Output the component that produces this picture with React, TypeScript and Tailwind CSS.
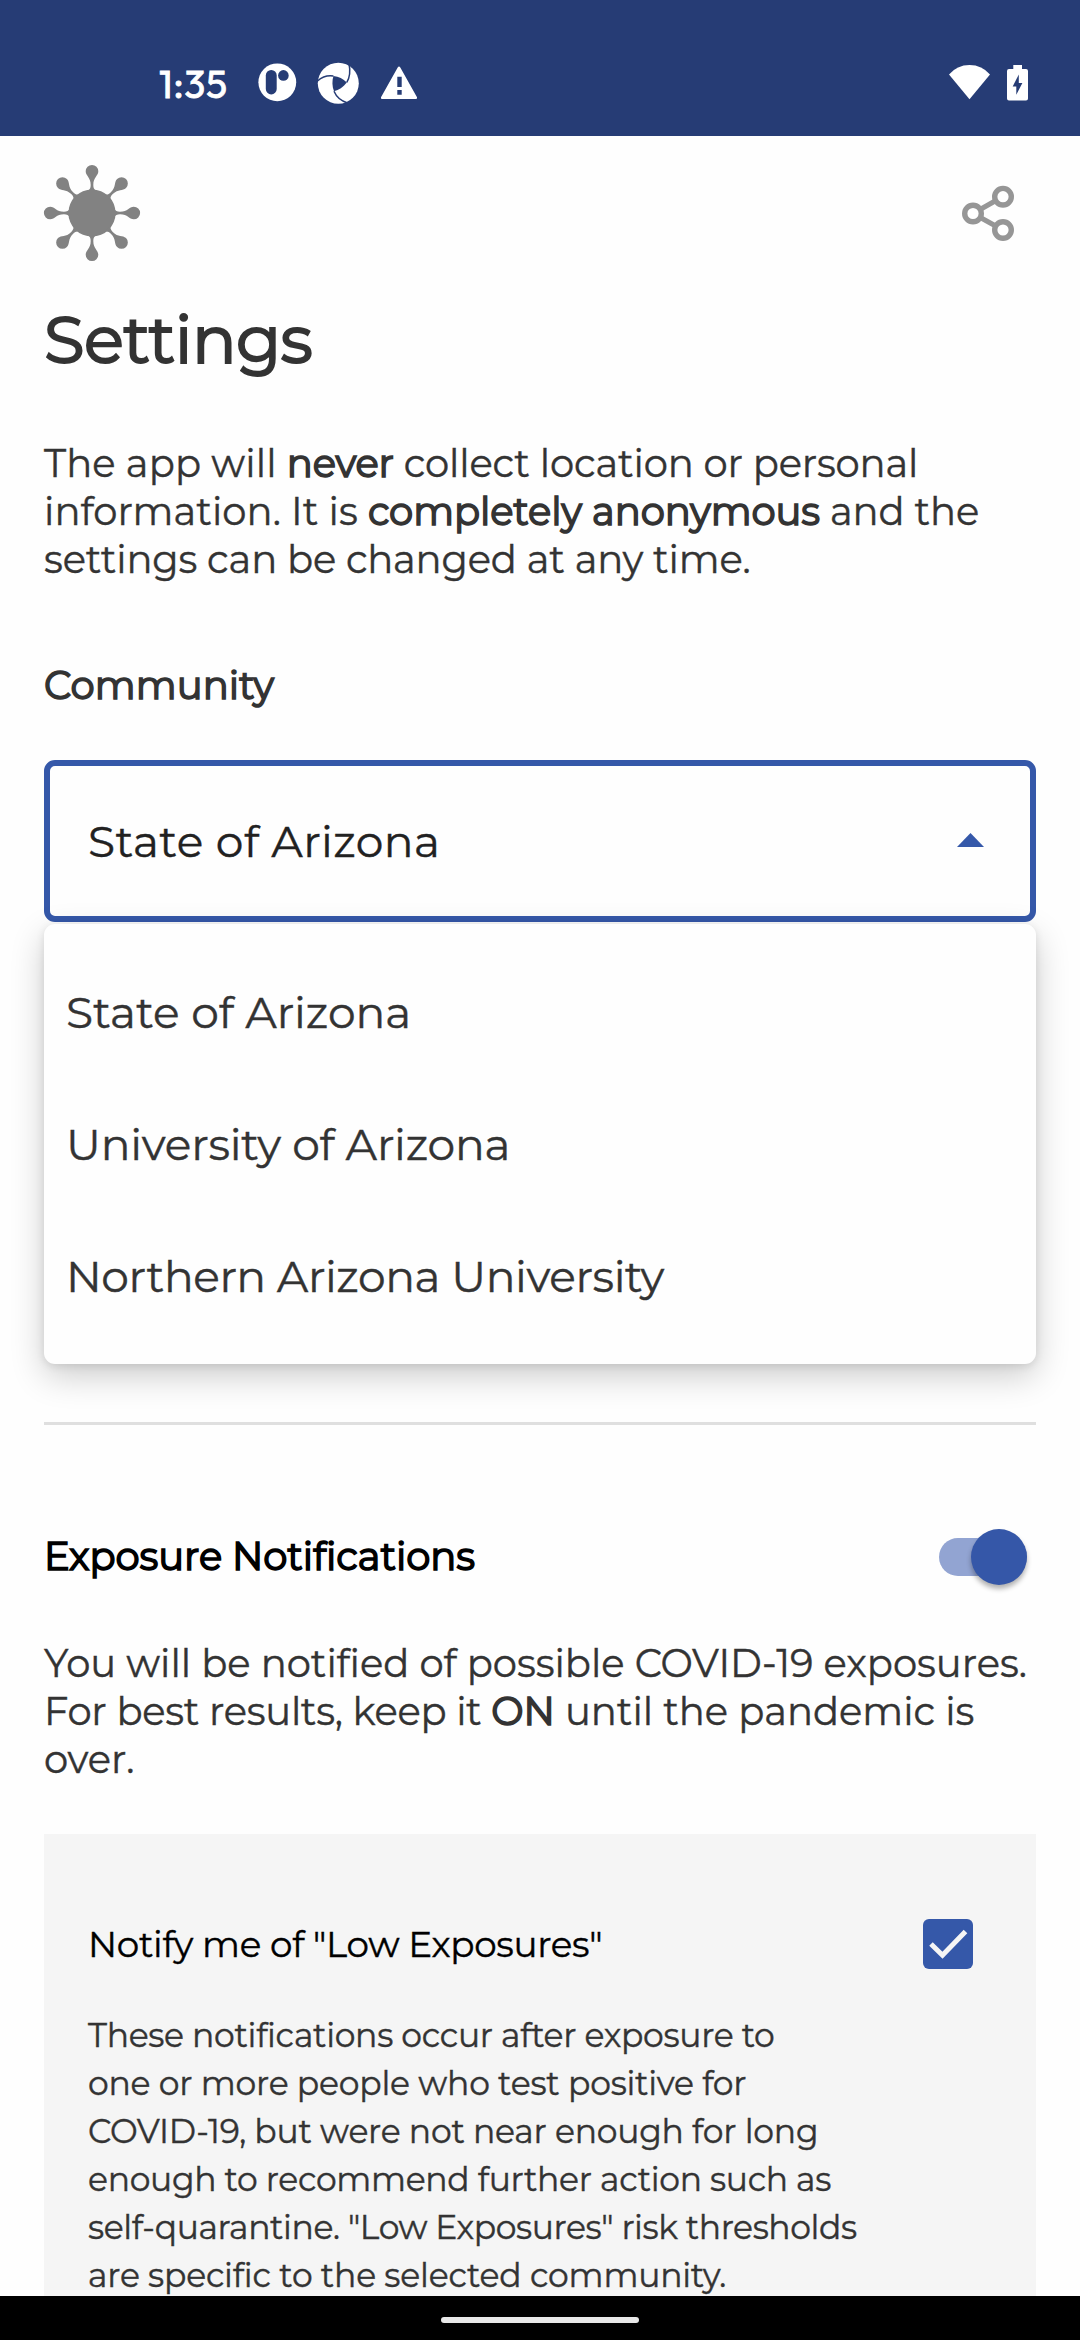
import React from "react";

function VirusIcon() {
  return (
    <svg className="-ml-px h-[98px] w-[98px]" viewBox="-49 -49 98 98" fill="#828282">
      <circle r="23.6" />
      {[0, 45, 90, 135, 180, 225, 270, 315].map((a) => (
        <path
          key={a}
          transform={`rotate(${a})`}
          d="M-4.5 -22C-2 -23.5 -1.3 -25 -1.3 -28C-1.3 -36 -6.3 -37 -6.3 -41.8A6.3 6.3 0 0 1 6.3 -41.8C6.3 -37 1.3 -36 1.3 -28C1.3 -25 2 -23.5 4.5 -22Z"
        />
      ))}
    </svg>
  );
}

function ShareIcon() {
  return (
    <svg className="h-[56px] w-[54px]" viewBox="0 0 54 56" fill="none" stroke="#969696">
      <path d="M12 28.5L42 11.5M12 28.5L42 45" strokeWidth="5" />
      <g fill="#fff" strokeWidth="5.4">
        <circle cx="12" cy="28.5" r="8.3" />
        <circle cx="42" cy="11.7" r="8.3" />
        <circle cx="42" cy="45" r="8.3" />
      </g>
    </svg>
  );
}

function StatusBar() {
  return (
    <div className="flex h-[136px] shrink-0 items-center bg-[#263c75] pt-[30px] pr-[50px] pl-[159px]">
      <span className="w-[99px] pt-[2px] font-['Outfit','Montserrat','Inter',sans-serif] text-[39px] leading-[48px] tracking-[0.6px] text-white [-webkit-text-stroke:0.8px]">
        1:35
      </span>
      <svg className="h-[42px] w-[160px]" viewBox="258 62 160 42" fill="#fff">
        <circle cx="277.3" cy="82.3" r="18.9" />
        <g fill="#263c75">
          <rect x="265.8" y="70" width="10.9" height="24.4" rx="5.4" />
          <circle cx="283.4" cy="75.4" r="5.3" />
        </g>
        <circle cx="338.3" cy="83.3" r="20.5" />
        <g fill="none" stroke="#263c75" strokeWidth="1.5">
          <path d="M346.8 82.4C349.5 78 350.5 71 349 63.5" />
          <path d="M334 91.3C336 96 341 101 347.5 103" />
          <path d="M333.4 76C327 75 322 77 317.5 81" />
        </g>
        <path d="M333.4 76C339 76.5 343 79 346.8 82.4C343 87 339 90 334 91.3C332 86 332 81 333.4 76Z" fill="#263c75" />
        <path
          fillRule="evenodd"
          d="M397.7 67.5Q399 65.6 400.3 67.5L417 97.3Q417.6 99 416 99H382Q380.4 99 381 97.3ZM397.3 76.7V87H401.7V76.7ZM397.3 90V94.7H401.7V90Z"
        />
      </svg>
      <svg className="ml-auto h-[40px] w-[82px]" viewBox="948 63 82 40" fill="#fff">
        <path d="M949 74.5Q957 65 969.5 65Q982 65 990 74.5L969.5 99.3Z" />
        <path
          fillRule="evenodd"
          d="M1013.3 65H1022V69H1026Q1028 69 1028 71V98.5Q1028 100.5 1026 100.5H1009Q1007 100.5 1007 98.5V71Q1007 69 1009 69H1013.3ZM1018.8 74.5L1012.7 86.4H1016.3V94.8L1022.4 83H1018.8Z"
        />
      </svg>
    </div>
  );
}

function Strong({ children }: { children: React.ReactNode }) {
  return <span className="[-webkit-text-stroke:1.5px]">{children}</span>;
}

function Lines({ items }: { items: [React.ReactNode, string][] }) {
  return (
    <>
      {items.map(([text, tracking], i) => (
        <span key={i} className={`block whitespace-nowrap ${tracking}`}>
          {text}
        </span>
      ))}
    </>
  );
}

export default function App() {
  return (
    <div className="flex h-[2340px] w-[1080px] flex-col overflow-hidden bg-[#fefefe] font-['Montserrat','Inter',sans-serif] text-[38.5px] leading-[48px] text-[#333] [-webkit-text-stroke:0.4px]">
      <StatusBar />
      <main className="flex min-h-0 flex-1 flex-col overflow-hidden px-[44px]">
        <header className="flex h-[154px] shrink-0 items-center justify-between pr-[21px]">
          <VirusIcon />
          <ShareIcon />
        </header>
        <h1 className="mt-[10px] shrink-0 text-[66px] leading-[80px] tracking-[-0.6px] [-webkit-text-stroke:2px]">
          Settings
        </h1>
        <p className="mt-[60px] shrink-0">
          <Lines
            items={[
              [
                <>
                  <span className="tracking-[0.1px]">The app will </span>
                  <Strong>never</Strong> collect location or personal
                </>,
                "tracking-[-0.15px]",
              ],
              [
                <>
                  <span className="tracking-[0.05px]">information. It is </span>
                  <Strong>completely anonymous</Strong> and the
                </>,
                "tracking-[-0.1px]",
              ],
              ["settings can be changed at any time.", "tracking-[-0.15px]"],
            ]}
          />
        </p>
        <h2 className="mt-[78px] shrink-0 tracking-[0.1px] [-webkit-text-stroke:1.5px]">Community</h2>
        <div className="relative mt-[50px] shrink-0">
          <div className="flex h-[162px] items-center justify-between rounded-[11px] border-6 border-[#3558a9] pr-[46px] pl-[38px]">
            <span className="text-[44px] tracking-[0.45px] text-[#212121]">State of Arizona</span>
            <svg className="mb-[2px] h-[14px] w-[27px]" viewBox="0 0 27 14" fill="#3558a9">
              <path d="M13.5 0L27 14H0Z" />
            </svg>
          </div>
          <ul className="absolute inset-x-0 top-[164px] z-10 rounded-[11px] bg-[#fefefe] py-[22px] text-[44px] shadow-[0_12px_34px_rgba(0,0,0,0.2),0_2px_8px_rgba(0,0,0,0.1)]">
            <li className="flex h-[132px] items-center pl-[22px]">State of Arizona</li>
            <li className="flex h-[132px] items-center pl-[22px] tracking-[-0.2px]">University of Arizona</li>
            <li className="flex h-[132px] items-center pl-[22px] tracking-[-0.4px]">Northern Arizona University</li>
          </ul>
        </div>
        <hr className="mt-[500px] h-[3px] shrink-0 border-0 bg-[#dfdfdf]" />
        <section className="mt-[104px] flex h-[56px] shrink-0 items-center justify-between pr-[9px]">
          <h2 className="tracking-[-0.1px] text-black [-webkit-text-stroke:1.5px]">Exposure Notifications</h2>
          <div className="flex h-[38px] w-[88px] items-center justify-end rounded-full bg-[#92a4d2]">
            <div className="size-[56px] shrink-0 rounded-full bg-[#3557a8] shadow-[0_4px_5px_rgba(0,0,0,0.3)]" />
          </div>
        </section>
        <p className="mt-[55px] shrink-0">
          <Lines
            items={[
              ["You will be notified of possible COVID-19 exposures.", "tracking-normal"],
              [
                <>
                  <span className="tracking-[-0.24px]">For best results, keep it </span>
                  <Strong>ON</Strong> until the pandemic is
                </>,
                "tracking-normal",
              ],
              ["over.", "tracking-normal"],
            ]}
          />
        </p>
        <section className="mt-[50px] shrink-0 bg-[#f5f5f5] px-[44px] pt-[85px]">
          <div className="flex h-[50px] items-center justify-between pr-[19px]">
            <h3 className="text-[35.75px] tracking-[-0.3px] text-black">Notify me of "Low Exposures"</h3>
            <svg className="size-[50px]" viewBox="0 0 50 50" fill="none">
              <rect width="50" height="50" rx="6" fill="#3558a9" />
              <path d="M8 25L19.5 36.3L42.5 12.5" stroke="#f5f5f5" strokeWidth="5" />
            </svg>
          </div>
          <p className="mt-[42px] text-[33px]">
            <Lines
              items={[
                ["These notifications occur after exposure to", "tracking-[-0.3px]"],
                ["one or more people who test positive for", "tracking-[-0.2px]"],
                ["COVID-19, but were not near enough for long", "tracking-[-0.22px]"],
                ["enough to recommend further action such as", "tracking-[-0.3px]"],
                ['self-quarantine. "Low Exposures" risk thresholds', "tracking-[-0.39px]"],
                ["are specific to the selected community.", "tracking-[-0.19px]"],
              ]}
            />
          </p>
        </section>
      </main>
      <div className="flex h-[44px] shrink-0 items-center justify-center bg-black pt-[4px]">
        <div className="h-[6px] w-[198px] rounded-full bg-[#e8e8e8]" />
      </div>
    </div>
  );
}
